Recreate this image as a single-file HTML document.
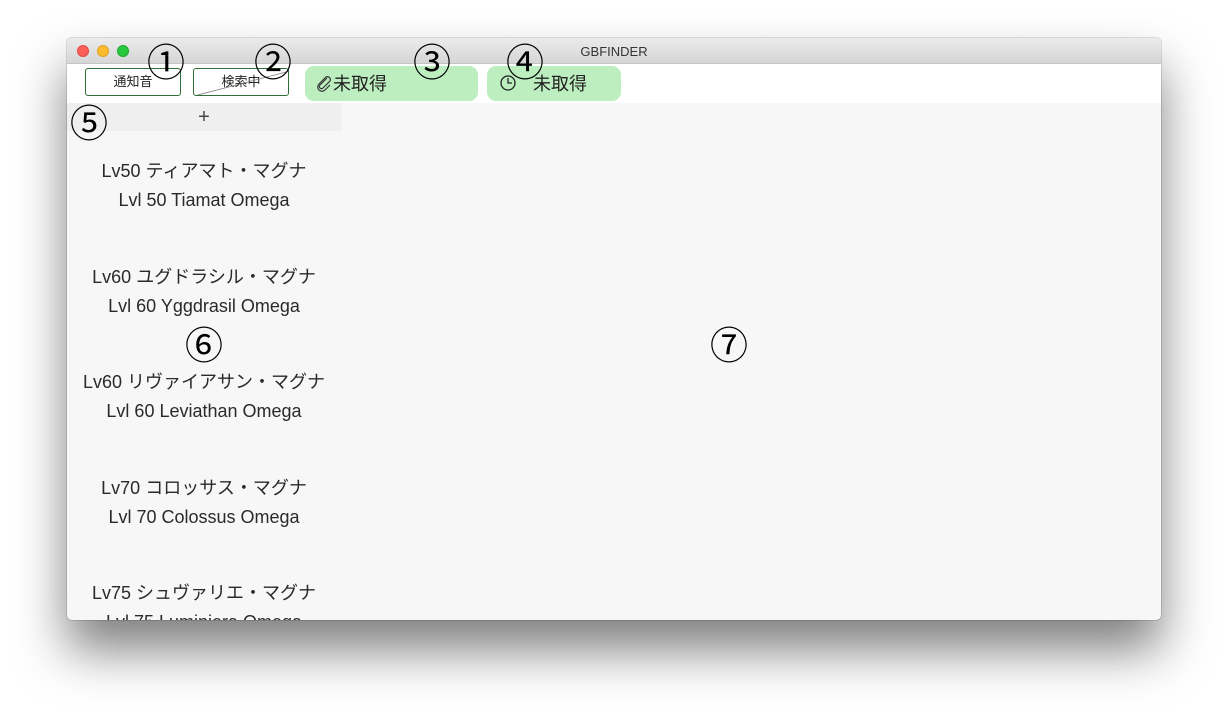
<!DOCTYPE html>
<html><head><meta charset="utf-8"><style>
*{margin:0;padding:0;box-sizing:border-box}
body{width:1228px;height:716px;background:#fff;position:relative;overflow:hidden;font-family:"Liberation Sans","Noto Sans CJK JP",sans-serif;color:#222}
.win{position:absolute;left:67px;top:38px;width:1094px;height:582px;border-radius:5px;overflow:hidden;background:#f7f7f7;box-shadow:0 30px 50px rgba(0,0,0,.5),0 0 0 1px rgba(0,0,0,.12)}
.title{position:absolute;left:0;top:0;width:100%;height:26px;background:linear-gradient(#ebebeb,#d6d6d6);border-bottom:1px solid #c4c4c4;text-align:center;font-size:13px;line-height:27px;color:#333}
.dot{position:absolute;top:7px;width:12px;height:12px;border-radius:50%}
.tb{position:absolute;left:0;top:26px;width:100%;height:39px;background:#fff}
.btn{position:absolute;top:4px;height:28px;width:96px;border:1px solid #2e6f35;border-radius:3px;font-size:13px;text-align:center;line-height:26px;background:#fff;overflow:hidden}
.pill{position:absolute;top:2px;height:35px;background:#bdeebf;border-radius:9px;font-size:18px;line-height:37px}
.strip{position:absolute;left:0;top:65px;width:274px;height:28px;background:#efefef;text-align:center;font-size:20px;line-height:29px;color:#444}
.item{position:absolute;left:0;width:274px;text-align:center;font-size:18px;line-height:29px;color:#2a2a2a}
.c{position:absolute;font-family:"Noto Sans CJK JP",sans-serif;font-size:38px;line-height:1;color:#000;transform:translate(-50%,-50%)}
</style></head><body>
<div class="win">
 <div class="title">GBFINDER
  <div class="dot" style="left:10px;background:#fc5f57;border:1px solid #de4b43"></div>
  <div class="dot" style="left:30px;background:#fdbc2e;border:1px solid #dea123"></div>
  <div class="dot" style="left:50px;background:#28c840;border:1px solid #1daa2f"></div>
 </div>
 <div class="tb">
  <div class="btn" style="left:18px">通知音</div>
  <div class="btn" style="left:126px">検索中<svg style="position:absolute;left:0;top:0" width="96" height="28"><line x1="0" y1="27" x2="96" y2="2" stroke="#777" stroke-width="0.8"/></svg></div>
  <div class="pill" style="left:238px;width:173px;padding-left:10px"><svg width="18" height="18" viewBox="0 0 18 18" style="vertical-align:-2px"><path d="M12 4 L5 11 a2 2 0 0 0 3 3 L15 7 a3 3 0 0 0 -4 -4 L4 10 a4 4 0 0 0 6 6 L15 11" fill="none" stroke="#333" stroke-width="1.2"/></svg>未取得</div>
  <div class="pill" style="left:420px;width:134px;padding-left:12px"><svg width="18" height="18" viewBox="0 0 18 18" style="vertical-align:-2px"><circle cx="9" cy="9" r="7" fill="none" stroke="#222" stroke-width="1.3"/><path d="M9 4 V9 H13" fill="none" stroke="#222" stroke-width="1.3"/></svg><span style="margin-left:16px">未取得</span></div>
 </div>
 <div class="strip">+</div>
 <div class="item" style="top:119px">Lv50 ティアマト・マグナ<br>Lvl 50 Tiamat Omega</div>
 <div class="item" style="top:225px">Lv60 ユグドラシル・マグナ<br>Lvl 60 Yggdrasil Omega</div>
 <div class="item" style="top:330px">Lv60 リヴァイアサン・マグナ<br>Lvl 60 Leviathan Omega</div>
 <div class="item" style="top:436px">Lv70 コロッサス・マグナ<br>Lvl 70 Colossus Omega</div>
 <div class="item" style="top:541px">Lv75 シュヴァリエ・マグナ<br>Lvl 75 Luminiera Omega</div>
</div>
<div class="c" style="left:166px;top:60px">①</div>
<div class="c" style="left:273px;top:60px">②</div>
<div class="c" style="left:432px;top:60px">③</div>
<div class="c" style="left:525px;top:60px">④</div>
<div class="c" style="left:89px;top:121px">⑤</div>
<div class="c" style="left:204px;top:343px">⑥</div>
<div class="c" style="left:729px;top:343px">⑦</div>
</body></html>
